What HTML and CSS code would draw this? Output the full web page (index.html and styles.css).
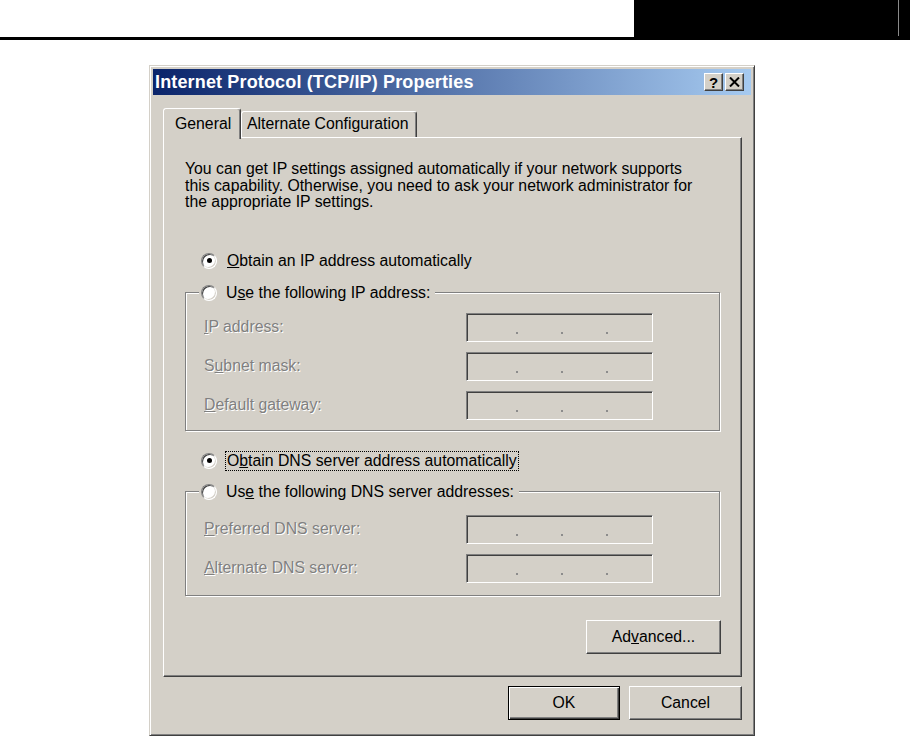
FILE: index.html
```html
<!DOCTYPE html>
<html lang="en">
<head>
  <meta charset="UTF-8">
  <title>Internet Protocol (TCP/IP) Properties</title>
  <link rel="stylesheet" href="styles.css">
</head>
<body>

  <div class="page-head">
    <div class="head-blank"></div>
    <div class="head-black"><span class="head-rule"></span></div>
  </div>

  <div class="dialog">
    <div class="titlebar">
      <span class="title">Internet Protocol (TCP/IP) Properties</span>
      <div class="caption-btns">
        <span class="cap-btn">?</span>
        <span class="cap-btn">
          <svg width="11" height="10" viewBox="0 0 11 10"><path d="M1 0.5 L10 9.5 M10 0.5 L1 9.5" stroke="#000" stroke-width="2"/></svg>
        </span>
      </div>
    </div>

    <div class="dlg-body">
      <div class="tabs">
        <div class="tab active">General</div>
        <div class="tab alt">Alternate Configuration</div>
      </div>

      <div class="sheet">
        <p class="intro">You can get IP settings assigned automatically if your network supports this capability. Otherwise, you need to ask your network administrator for the appropriate IP settings.</p>

        <div class="radio-row top-gap">
          <span class="radio checked"></span>
          <span class="radio-text"><u>O</u>btain an IP address automatically</span>
        </div>

        <fieldset class="group">
          <legend>
            <span class="radio"></span>
            <span class="radio-text">U<u>s</u>e the following IP address:</span>
          </legend>
          <div class="fields">
            <div class="field-row">
              <span class="lbl"><u>I</u>P address:</span>
              <span class="ip-box"><i></i><i></i><i></i></span>
            </div>
            <div class="field-row">
              <span class="lbl">S<u>u</u>bnet mask:</span>
              <span class="ip-box"><i></i><i></i><i></i></span>
            </div>
            <div class="field-row">
              <span class="lbl"><u>D</u>efault gateway:</span>
              <span class="ip-box"><i></i><i></i><i></i></span>
            </div>
          </div>
        </fieldset>

        <div class="radio-row mid-gap">
          <span class="radio checked"></span>
          <span class="radio-text focus">O<u>b</u>tain DNS server address automatically</span>
        </div>

        <fieldset class="group dns">
          <legend>
            <span class="radio"></span>
            <span class="radio-text">Us<u>e</u> the following DNS server addresses:</span>
          </legend>
          <div class="fields">
            <div class="field-row">
              <span class="lbl"><u>P</u>referred DNS server:</span>
              <span class="ip-box"><i></i><i></i><i></i></span>
            </div>
            <div class="field-row">
              <span class="lbl"><u>A</u>lternate DNS server:</span>
              <span class="ip-box"><i></i><i></i><i></i></span>
            </div>
          </div>
        </fieldset>

        <div class="sheet-actions">
          <button class="btn advanced">Ad<u>v</u>anced...</button>
        </div>
      </div>

      <div class="footer">
        <button class="btn default">OK</button>
        <button class="btn">Cancel</button>
      </div>
    </div>
  </div>

</body>
</html>
```

FILE: styles.css
```css
html, body {
  margin: 0;
  padding: 0;
  overflow: hidden;
}

body {
  background: #fff;
  font-family: "Liberation Sans", Arial, sans-serif;
  font-size: 15.8px;
  color: #000;
}

/* page header strip */
.page-head {
  display: flex;
  height: 37px;
  border-bottom: 3px solid #000;
}

.head-blank {
  width: 634px;
}

.head-black {
  flex: 1;
  background: #000;
  display: flex;
  padding-left: 264px;
}

.head-rule {
  width: 1px;
  height: 36px;
  background: #8a8a8a;
}

/* window */
.dialog {
  margin: 25px 0 0 149px;
  width: 606px;
  height: 671px;
  box-sizing: border-box;
  background: #d4d0c8;
  border: 1px solid;
  border-color: #d4d0c8 #404040 #404040 #d4d0c8;
  box-shadow: inset 1px 1px 0 #fff, inset -1px -1px 0 #808080;
  padding: 3px;
  overflow: hidden;
}

.titlebar {
  height: 26px;
  display: flex;
  align-items: center;
  justify-content: space-between;
  padding: 0 7px 0 2px;
  background: linear-gradient(to right, #0a246a, #a6caf0);
}

.title {
  color: #fff;
  font-weight: bold;
  font-size: 18px;
  letter-spacing: 0.15px;
}

.caption-btns {
  display: flex;
  gap: 2px;
}

.cap-btn {
  width: 19px;
  height: 18px;
  box-sizing: border-box;
  display: flex;
  align-items: center;
  justify-content: center;
  background: #d4d0c8;
  border: 1px solid;
  border-color: #fff #404040 #404040 #fff;
  box-shadow: inset -1px -1px 0 #808080;
  font-weight: bold;
  font-size: 15px;
  line-height: 1;
}

.dlg-body {
  padding: 13px 9px 0 10px;
}

/* tabs */
.tabs {
  display: flex;
  align-items: flex-end;
  height: 29px;
}

.tab {
  box-sizing: border-box;
  height: 26px;
  border: 1px solid;
  border-bottom: none;
  border-color: #fff #404040 transparent #fff;
  box-shadow: inset -1px 0 0 #808080;
  border-radius: 3px 3px 0 0;
  line-height: 24px;
  padding: 0 5px;
  white-space: nowrap;
}

.tab.active {
  width: 78px;
  height: 31px;
  margin-bottom: -2px;
  padding: 0 11px;
  line-height: 30px;
  position: relative;
  z-index: 1;
  background: #d4d0c8;
}

.tab.alt {
  width: 176px;
}

/* property sheet */
.sheet {
  box-sizing: border-box;
  height: 540px;
  border: 1px solid;
  border-color: #fff #404040 #404040 #fff;
  box-shadow: inset -1px -1px 0 #808080;
  padding: 0 0 0 21px;
}

.intro {
  width: 518px;
  margin: 23px 0 0 0;
  line-height: 16.5px;
}

.radio-row {
  display: flex;
  align-items: center;
  height: 20px;
  padding-left: 16px;
  gap: 8px;
}

.radio-row.top-gap {
  margin-top: 40px;
}

.radio-row.mid-gap {
  margin-top: 20px;
}

.radio {
  width: 16px;
  height: 16px;
  box-sizing: border-box;
  border-radius: 50%;
  background: #fff;
  border: 1px solid;
  border-color: #808080 #fff #fff #808080;
  box-shadow: inset 1px 1px 0 #404040, inset -1px -1px 0 #d4d0c8;
  display: flex;
  align-items: center;
  justify-content: center;
  flex-shrink: 0;
}

.radio.checked::after {
  content: "";
  width: 5px;
  height: 5px;
  border-radius: 50%;
  background: #000;
}

.radio-text {
  border: 1px solid transparent;
  padding: 0 1px;
  line-height: 18px;
  white-space: nowrap;
}

.radio-text.focus {
  border: 1px dotted #000;
}

.group {
  margin: 12px 0 0 0;
  width: 535px;
  box-sizing: border-box;
  padding: 0 0 10px 0;
  min-width: 0;
  border: 1px solid #808080;
  box-shadow: 1px 1px 0 #fff, inset 1px 1px 0 #fff;
}

.group.dns {
  margin-top: 11px;
  padding-bottom: 12px;
}

.group legend {
  display: flex;
  align-items: center;
  gap: 7px;
  height: 20px;
  margin-left: 13px;
  padding: 0 3px 0 2px;
  background: #d4d0c8;
}

.fields {
  display: flex;
  flex-direction: column;
  gap: 10px;
  padding-top: 10px;
}

.dns .fields {
  padding-top: 13px;
}

.field-row {
  display: flex;
  align-items: center;
  padding-left: 18px;
}

.lbl {
  width: 262px;
  color: #808080;
  text-shadow: 1px 1px 0 #fff;
}

.ip-box {
  width: 187px;
  height: 29px;
  box-sizing: border-box;
  background: #d4d0c8;
  border: 1px solid;
  border-color: #808080 #fff #fff #808080;
  box-shadow: inset 1px 1px 0 #404040, inset -1px -1px 0 #d4d0c8;
  display: flex;
  align-items: flex-end;
  gap: 43px;
  padding: 0 0 7px 49px;
}

.ip-box i {
  width: 2px;
  height: 2px;
  background: #8c8c8c;
}

/* buttons */
.sheet-actions {
  width: 536px;
  display: flex;
  justify-content: flex-end;
  margin-top: 24px;
}

.btn {
  box-sizing: border-box;
  height: 34px;
  font-family: "Liberation Sans", Arial, sans-serif;
  font-size: 15.8px;
  color: #000;
  background: #d4d0c8;
  border: 1px solid;
  border-color: #fff #404040 #404040 #fff;
  box-shadow: inset -1px -1px 0 #808080;
  padding: 0;
  cursor: pointer;
}

.btn.advanced {
  width: 135px;
}

.footer {
  display: flex;
  justify-content: flex-end;
  gap: 9px;
  margin-top: 9px;
}

.footer .btn {
  width: 113px;
}

.btn.default {
  width: 112px;
  border: 1px solid #000;
  box-shadow: inset 1px 1px 0 #fff, inset -1px -1px 0 #404040, inset -2px -2px 0 #808080;
}
```
